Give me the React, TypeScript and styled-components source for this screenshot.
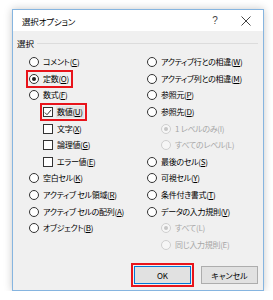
import * as React from "react"
import styled, { createGlobalStyle } from "styled-components"

const Global = createGlobalStyle`
  body {
    margin: 0;
    background: #fff;
    font-family: "Noto Sans CJK JP", "Liberation Sans", sans-serif;
  }
`

type Entry = {
  text: string
  key?: string
  kind: "radio" | "check"
  checked?: boolean
  disabled?: boolean
  indent?: boolean
  hl?: boolean
  focus?: boolean
}

const left: Entry[] = [
  { text: "コメント", key: "C", kind: "radio" },
  { text: "定数", key: "O", kind: "radio", checked: true, hl: true },
  { text: "数式", key: "F", kind: "radio" },
  { text: "数値", key: "U", kind: "check", checked: true, indent: true, hl: true, focus: true },
  { text: "文字", key: "X", kind: "check", indent: true },
  { text: "論理値", key: "G", kind: "check", indent: true },
  { text: "エラー値", key: "E", kind: "check", indent: true },
  { text: "空白セル", key: "K", kind: "radio" },
  { text: "アクティブ セル領域", key: "R", kind: "radio" },
  { text: "アクティブ セルの配列", key: "A", kind: "radio" },
  { text: "オブジェクト", key: "B", kind: "radio" },
]

const right: Entry[] = [
  { text: "アクティブ行との相違", key: "W", kind: "radio" },
  { text: "アクティブ列との相違", key: "M", kind: "radio" },
  { text: "参照元", key: "P", kind: "radio" },
  { text: "参照先", key: "D", kind: "radio" },
  { text: "1 レベルのみ", key: "I", kind: "radio", checked: true, disabled: true, indent: true },
  { text: "すべてのレベル", key: "L", kind: "radio", disabled: true, indent: true },
  { text: "最後のセル", key: "S", kind: "radio" },
  { text: "可視セル", key: "Y", kind: "radio" },
  { text: "条件付き書式", key: "T", kind: "radio" },
  { text: "データの入力規則", key: "V", kind: "radio" },
  { text: "すべて", key: "L", kind: "radio", checked: true, disabled: true, indent: true },
  { text: "同じ入力規則", key: "E", kind: "radio", disabled: true, indent: true },
]

function App() {
  return (
    <>
      <Global />
      <Dialog>
        <TitleBar>
          <Title>選択オプション</Title>
          <TitleBtn>?</TitleBtn>
          <CloseBtn>
            <svg width="10" height="10" viewBox="0 0 10 10">
              <path d="M0.5 0.5L9.5 9.5M9.5 0.5L0.5 9.5" stroke="#444" strokeWidth="1" fill="none" />
            </svg>
          </CloseBtn>
        </TitleBar>
        <Body>
          <GroupHead>
            <GroupLabel>選択</GroupLabel>
            <GroupLine />
          </GroupHead>
          <Columns>
            <Column $left={12}>
              {left.map((e, i) => (
                <Row key={i} entry={e} />
              ))}
            </Column>
            <Column $left={0}>
              {right.map((e, i) => (
                <Row key={i} entry={e} />
              ))}
            </Column>
          </Columns>
          <Buttons>
            <Highlight>
              <Button $default>OK</Button>
            </Highlight>
            <Button>キャンセル</Button>
          </Buttons>
        </Body>
      </Dialog>
    </>
  )
}

function Row({ entry }: { entry: Entry }) {
  return (
    <RowBox $indent={entry.indent}>
      <Item $hl={entry.hl} $disabled={entry.disabled}>
        {entry.kind === "radio" ? (
          <Radio $disabled={entry.disabled}>{entry.checked && <Dot $disabled={entry.disabled} />}</Radio>
        ) : (
          <Check>
            {entry.checked && (
              <svg width="9" height="9" viewBox="0 0 9 9">
                <path d="M1 4.6L3.4 7L8 1.6" stroke="#222" strokeWidth="1" fill="none" />
              </svg>
            )}
          </Check>
        )}
        <Label $focus={entry.focus}>
          {entry.text}({entry.disabled ? entry.key : <u>{entry.key}</u>})
        </Label>
      </Item>
    </RowBox>
  )
}

const Dialog = styled.div`
  margin: 9px 0 0 12px;
  width: 250px;
  height: 280px;
  border: 1px solid #86b5e0;
  background: #f0f0f0;
  box-shadow: 0 0 8px rgba(0, 0, 0, 0.22);
  display: flex;
  flex-direction: column;
`

const TitleBar = styled.div`
  height: 21px;
  background: #fff;
  display: flex;
  align-items: center;
  padding-left: 9px;
`

const Title = styled.div`
  flex: 1;
  font-size: 8.5px;
  letter-spacing: -0.2px;
  font-feature-settings: "palt";
  color: #000;
`

const TitleBtn = styled.div`
  width: 20px;
  text-align: center;
  font-family: "Liberation Sans", sans-serif;
  font-size: 10px;
  color: #444;
  margin-right: 16px;
`

const CloseBtn = styled.div`
  width: 10px;
  height: 10px;
  display: flex;
  margin-right: 12px;
`

const Body = styled.div`
  flex: 1;
  display: flex;
  flex-direction: column;
  padding: 0 5px 0 4px;
`

const GroupHead = styled.div`
  display: flex;
  align-items: center;
  height: 22px;
  padding-top: 1px;
`

const GroupLabel = styled.span`
  font-size: 8.5px;
  color: #000;
  margin-right: 3px;
`

const GroupLine = styled.div`
  flex: 1;
  height: 1px;
  background: #dcdcdc;
`

const Columns = styled.div`
  display: grid;
  grid-template-columns: 130px 1fr;
`

const Column = styled.div<{ $left: number }>`
  display: flex;
  flex-direction: column;
  padding-left: ${(p) => p.$left}px;
`

const RowBox = styled.div<{ $indent?: boolean }>`
  height: 16.6px;
  display: flex;
  align-items: center;
  padding-left: ${(p) => (p.$indent ? 14 : 0)}px;
`

const Item = styled.div<{ $hl?: boolean; $disabled?: boolean }>`
  display: flex;
  align-items: center;
  gap: 3px;
  padding: 1px 1px;
  margin-left: -1px;
  color: ${(p) => (p.$disabled ? "#a6a6a6" : "#000")};
  outline: ${(p) => (p.$hl ? "2px solid #e8141b" : "none")};
  outline-offset: 0;
`

const Radio = styled.span<{ $disabled?: boolean }>`
  width: 10px;
  height: 10px;
  box-sizing: border-box;
  border-radius: 50%;
  border: 1px solid ${(p) => (p.$disabled ? "#cfcfcf" : "#333")};
  background: ${(p) => (p.$disabled ? "#f6f6f6" : "#fff")};
  display: flex;
  align-items: center;
  justify-content: center;
`

const Dot = styled.span<{ $disabled?: boolean }>`
  width: 4px;
  height: 4px;
  border-radius: 50%;
  background: ${(p) => (p.$disabled ? "#c6c6c6" : "#222")};
`

const Check = styled.span`
  width: 10px;
  height: 10px;
  box-sizing: border-box;
  border: 1px solid #333;
  background: #fff;
  display: flex;
  align-items: center;
  justify-content: center;
`

const Label = styled.span<{ $focus?: boolean }>`
  font-size: 8px;
  letter-spacing: -0.3px;
  line-height: 12px;
  font-feature-settings: "palt";
  white-space: nowrap;
  background: ${(p) => (p.$focus ? "#e3e3e3" : "transparent")};
  padding: 0 1px;
  u {
    text-underline-offset: 1px;
  }
`

const Buttons = styled.div`
  margin-top: auto;
  margin-bottom: 3px;
  display: flex;
  justify-content: flex-end;
  align-items: center;
  gap: 7px;
`

const Highlight = styled.div`
  border: 2px solid #e8141b;
  padding: 1px;
  display: flex;
`

const Button = styled.div<{ $default?: boolean }>`
  width: 57px;
  height: 18px;
  box-sizing: border-box;
  border: 1px solid ${(p) => (p.$default ? "#0078d7" : "#adadad")};
  background: #e1e1e1;
  display: flex;
  align-items: center;
  justify-content: center;
  font-size: 8px;
  font-feature-settings: "palt";
  color: #000;
`

export default App
